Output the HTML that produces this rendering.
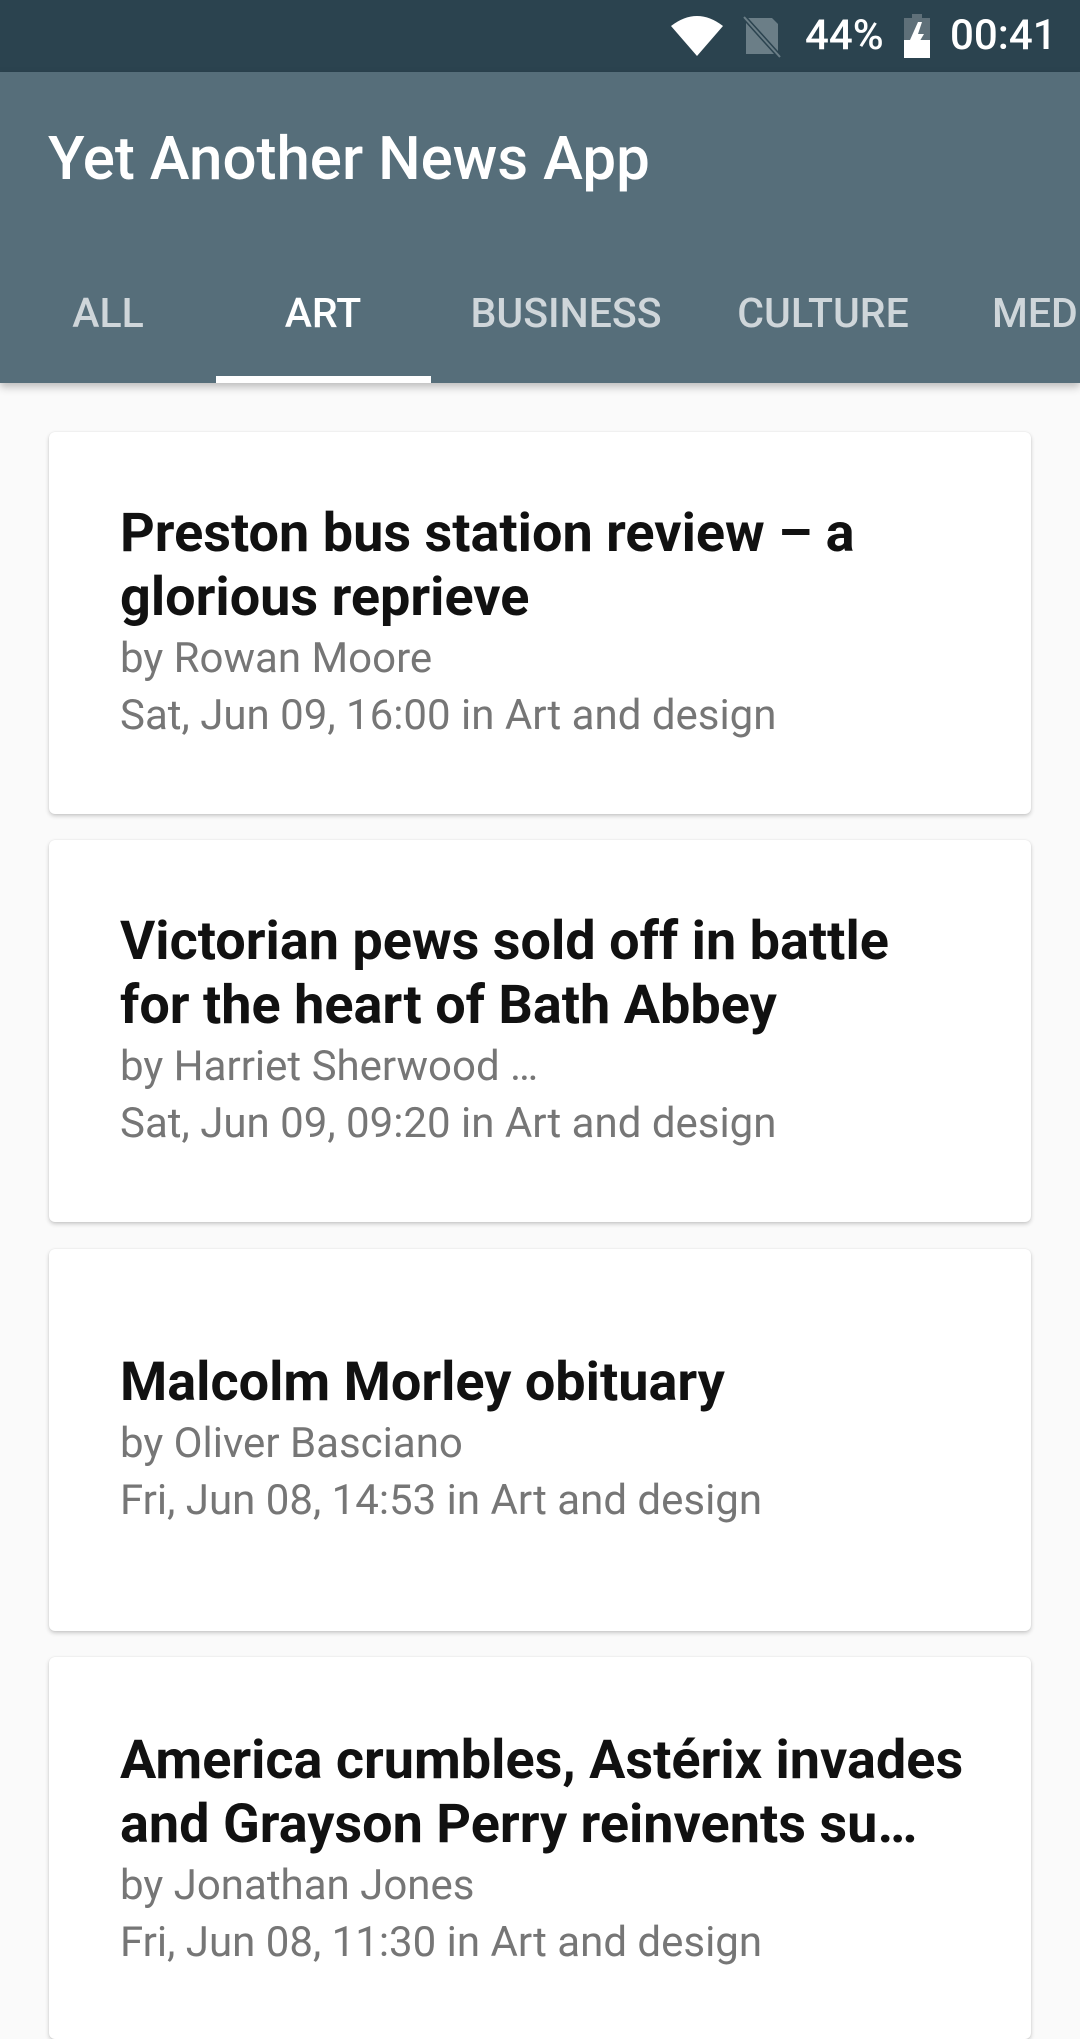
<!DOCTYPE html>
<html><head><meta charset="utf-8"><style>
*{margin:0;padding:0;box-sizing:border-box}
body{width:1080px;height:1920px;overflow:hidden;background:#fafafa;font-family:"Roboto","Liberation Sans",sans-serif;position:relative}
.sb{position:absolute;top:0;left:0;width:1080px;height:72px;background:#2b434f}
.ab{position:absolute;top:72px;left:0;width:1080px;height:311px;background:#566e7a;box-shadow:0 4px 8px rgba(0,0,0,.25);z-index:2}
.title{position:absolute;left:48px;top:50px;font-size:60px;font-weight:500;color:#fff;line-height:74px}
.tab{position:absolute;top:214px;font-size:41px;font-weight:500;color:#cfd6da;transform:translateX(-50%);line-height:56px;white-space:nowrap}
.ind{position:absolute;left:216px;top:304px;width:215px;height:7px;background:#fff}
.card{position:absolute;left:49px;width:982px;height:382px;background:#fff;border-radius:6px;box-shadow:0 2px 4px rgba(0,0,0,.2),0 0 1px rgba(0,0,0,.12);display:flex;flex-direction:column;justify-content:center;padding:0 90px 0 71px}
.t{font-size:54px;font-weight:bold;color:#111;line-height:64px}
.m{font-size:42px;color:#767676;line-height:57px}
.st{position:absolute;top:10px;color:#fff;font-size:42px;font-weight:500;line-height:52px}
</style></head><body>
<div class="sb">
<svg style="position:absolute;left:670px;top:14px" width="54" height="42" viewBox="0 0 54 42"><path d="M1 12 Q27 -8 53 12 L27 42 Z" fill="#fff"/></svg>
<svg style="position:absolute;left:742px;top:14px" width="40" height="46" viewBox="0 0 40 46"><path d="M4 4 H30 L36 10 V40 H4 Z" fill="#6b7e87"/><path d="M2 3 L38 43" stroke="#2b434f" stroke-width="5"/><path d="M2 3 L38 43" stroke="#6b7e87" stroke-width="2"/></svg>
<div class="st" style="left:805px">44%</div>
<svg style="position:absolute;left:904px;top:14px" width="26" height="44" viewBox="0 0 26 44"><rect x="8" y="0" width="10" height="5" fill="#5f7079"/><rect x="0" y="4" width="26" height="40" fill="#5f7079"/><rect x="0" y="26" width="26" height="18" fill="#fff"/><path d="M14 8 L6 26 H13 L8 40 L20 20 H14 L18 8Z" fill="#fff"/></svg>
<div class="st" style="left:950px">00:41</div>
</div>
<div class="ab">
<div class="title">Yet Another News App</div>
<div class="tab" style="left:108px">ALL</div>
<div class="tab" style="left:323px;color:#fff">ART</div>
<div class="tab" style="left:566px">BUSINESS</div>
<div class="tab" style="left:823px">CULTURE</div>
<div class="tab" style="left:992px;transform:none">MEDIA</div>
<div class="ind"></div>
</div>
<div class="card" style="top:432px"><div class="t">Preston bus station review – a<br>glorious reprieve</div><div class="m">by Rowan Moore</div><div class="m">Sat, Jun 09, 16:00 in Art and design</div></div>
<div class="card" style="top:840px"><div class="t">Victorian pews sold off in battle<br>for the heart of Bath Abbey</div><div class="m">by Harriet Sherwood …</div><div class="m">Sat, Jun 09, 09:20 in Art and design</div></div>
<div class="card" style="top:1249px"><div class="t">Malcolm Morley obituary</div><div class="m">by Oliver Basciano</div><div class="m">Fri, Jun 08, 14:53 in Art and design</div></div>
<div class="card" style="top:1657px;justify-content:flex-start;padding-top:72px"><div class="t" style="white-space:nowrap">America crumbles, Astérix invades<br>and Grayson Perry reinvents su…</div><div class="m">by Jonathan Jones</div><div class="m">Fri, Jun 08, 11:30 in Art and design</div></div>
</body></html>
